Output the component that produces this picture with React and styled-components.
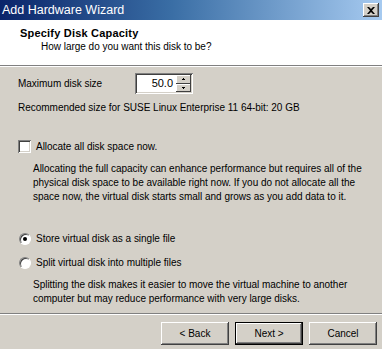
import React, { useState } from 'react';
import styled, { createGlobalStyle } from 'styled-components';

const GlobalStyle = createGlobalStyle`
  html, body {
    margin: 0;
    padding: 0;
    background: #d4d0c8;
  }
  body {
    font-family: Tahoma, "Liberation Sans", Arial, sans-serif;
    font-size: 10px;
    letter-spacing: -0.02px;
    color: #000;
  }
`;

// Fenêtre principale
const Fenetre = styled.div`
  width: 382px;
  height: 349px;
  display: flex;
  flex-direction: column;
  background: #d4d0c8;
  overflow: hidden;
  white-space: nowrap;
`;

const BarreTitre = styled.div`
  height: 20px;
  flex-shrink: 0;
  display: flex;
  align-items: center;
  justify-content: space-between;
  padding: 0 3px 0 2px;
  background: linear-gradient(to right, #0a246a 0%, #3a6ea5 45%, #a6caf0 100%);
`;

const TexteTitre = styled.span`
  color: #fff;
  font-size: 12.5px;
  letter-spacing: 0;
`;

const BoutonFermer = styled.button`
  width: 16px;
  height: 14px;
  padding: 0;
  margin: 0;
  display: flex;
  align-items: center;
  justify-content: center;
  background: #d4d0c8;
  border: none;
  box-shadow: inset -1px -1px #404040, inset 1px 1px #fff, inset -2px -2px #808080, inset 2px 2px #d4d0c8;
  cursor: pointer;
`;

const Entete = styled.div`
  height: 45px;
  flex-shrink: 0;
  background: #fff;
  padding: 6px 0 0 20px;
  box-sizing: border-box;
`;

const TitreEntete = styled.div`
  font-weight: bold;
  font-size: 11px;
  letter-spacing: 0.2px;
  line-height: 14px;
`;

const SousTitre = styled.div`
  margin: 0 0 0 21px;
  line-height: 14px;
`;

const Separateur = styled.div`
  height: 0;
  border-top: 1px solid #808080;
  border-bottom: 1px solid #fff;
  flex-shrink: 0;
`;

const Corps = styled.div`
  flex: 1;
  padding: 6px 0 0 18px;
  box-sizing: border-box;
`;

const LigneTaille = styled.div`
  display: flex;
  align-items: center;
  height: 21px;
`;

const Etiquette = styled.span`
  width: 117px;
`;

const ChampNombre = styled.div`
  width: 58px;
  height: 21px;
  box-sizing: border-box;
  display: flex;
  background: #fff;
  box-shadow: inset 1px 1px #808080, inset -1px -1px #fff, inset 2px 2px #404040, inset -2px -2px #d4d0c8;
  padding: 2px;
`;

const Valeur = styled.span`
  flex: 1;
  text-align: right;
  padding-right: 3px;
  line-height: 17px;
  font-size: 11px;
`;

const Fleches = styled.div`
  width: 15px;
  display: flex;
  flex-direction: column;
`;

const Fleche = styled.div`
  flex: 1;
  background: #d4d0c8;
  display: flex;
  align-items: center;
  justify-content: center;
  box-shadow: inset -1px -1px #404040, inset 1px 1px #fff;
`;

const Texte = styled.div`
  margin-top: ${(p) => p.$haut || 0}px;
  margin-left: ${(p) => p.$gauche || 0}px;
  line-height: ${(p) => p.$interligne || 13}px;
  white-space: pre;
`;

const LigneOption = styled.label`
  display: flex;
  align-items: center;
  gap: 5px;
  height: 13px;
  margin-top: ${(p) => p.$haut}px;
  margin-left: ${(p) => p.$gauche || 0}px;
  cursor: default;
`;

const CaseACocher = styled.span`
  width: 13px;
  height: 13px;
  box-sizing: border-box;
  background: #fff;
  box-shadow: inset 1px 1px #808080, inset -1px -1px #fff, inset 2px 2px #404040, inset -2px -2px #d4d0c8;
`;

const Radio = styled.span`
  width: 12px;
  height: 12px;
  box-sizing: border-box;
  border-radius: 50%;
  background: #fff;
  border: 1px solid;
  border-color: #808080 #fff #fff #808080;
  box-shadow: inset 1px 1px #404040;
  display: flex;
  align-items: center;
  justify-content: center;

  &::after {
    content: '';
    width: 4px;
    height: 4px;
    border-radius: 50%;
    background: ${(p) => (p.$coche ? '#000' : 'transparent')};
  }
`;

const PiedPage = styled.div`
  flex-shrink: 0;
  height: 34px;
  display: flex;
  justify-content: flex-end;
  align-items: flex-start;
  gap: 6px;
  padding: 7px 5px 0 0;
  box-sizing: border-box;
`;

const BoutonAssistant = styled.button`
  width: 68px;
  height: 23px;
  padding: 0;
  font-family: inherit;
  font-size: 10px;
  letter-spacing: 0;
  color: #000;
  background: #d4d0c8;
  border: ${(p) => (p.$defaut ? '1px solid #000' : 'none')};
  box-shadow: ${(p) =>
    p.$defaut
      ? 'inset -1px -1px #404040, inset 1px 1px #fff, inset -2px -2px #808080'
      : 'inset -1px -1px #404040, inset 1px 1px #fff, inset -2px -2px #808080, inset 2px 2px #d4d0c8'};
  cursor: pointer;
`;

const App = () => {
  const [unFichier, setUnFichier] = useState(true);

  return (
    <>
      <GlobalStyle />
      <Fenetre>
        <BarreTitre>
          <TexteTitre>Add Hardware Wizard</TexteTitre>
          <BoutonFermer aria-label="Fermer">
            <svg width="8" height="7" viewBox="0 0 8 7">
              <path d="M0 0h2l2 2 2-2h2L5 3.5 8 7H6L4 5 2 7H0l3-3.5z" fill="#000" />
            </svg>
          </BoutonFermer>
        </BarreTitre>

        <Entete>
          <TitreEntete>Specify Disk Capacity</TitreEntete>
          <SousTitre>How large do you want this disk to be?</SousTitre>
        </Entete>
        <Separateur />

        <Corps>
          <LigneTaille>
            <Etiquette>Maximum disk size</Etiquette>
            <ChampNombre>
              <Valeur>50.0</Valeur>
              <Fleches>
                <Fleche>
                  <svg width="3" height="2"><path d="M1 0h1v1h1v1H0V1h1z" fill="#000" /></svg>
                </Fleche>
                <Fleche>
                  <svg width="3" height="2"><path d="M0 0h3v1H2v1H1V1H0z" fill="#000" /></svg>
                </Fleche>
              </Fleches>
            </ChampNombre>
          </LigneTaille>

          <Texte $haut={7}>Recommended size for SUSE Linux Enterprise 11 64-bit: 20 GB</Texte>

          <LigneOption $haut={26}>
            <CaseACocher />
            <span>Allocate all disk space now.</span>
          </LigneOption>

          <Texte $haut={9} $gauche={15} $interligne={14}>
            {'Allocating the full capacity can enhance performance but requires all of the\nphysical disk space to be available right now. If you do not allocate all the\nspace now, the virtual disk starts small and grows as you add data to it.'}
          </Texte>

          <LigneOption $haut={28} $gauche={1} onClick={() => setUnFichier(true)}>
            <Radio $coche={unFichier} />
            <span>Store virtual disk as a single file</span>
          </LigneOption>

          <LigneOption $haut={11} $gauche={1} onClick={() => setUnFichier(false)}>
            <Radio $coche={!unFichier} />
            <span>Split virtual disk into multiple files</span>
          </LigneOption>

          <Texte $haut={9} $gauche={15} $interligne={14}>
            {'Splitting the disk makes it easier to move the virtual machine to another\ncomputer but may reduce performance with very large disks.'}
          </Texte>
        </Corps>

        <Separateur />
        <PiedPage>
          <BoutonAssistant>&lt; Back</BoutonAssistant>
          <BoutonAssistant $defaut>Next &gt;</BoutonAssistant>
          <BoutonAssistant>Cancel</BoutonAssistant>
        </PiedPage>
      </Fenetre>
    </>
  );
};

export default App;
